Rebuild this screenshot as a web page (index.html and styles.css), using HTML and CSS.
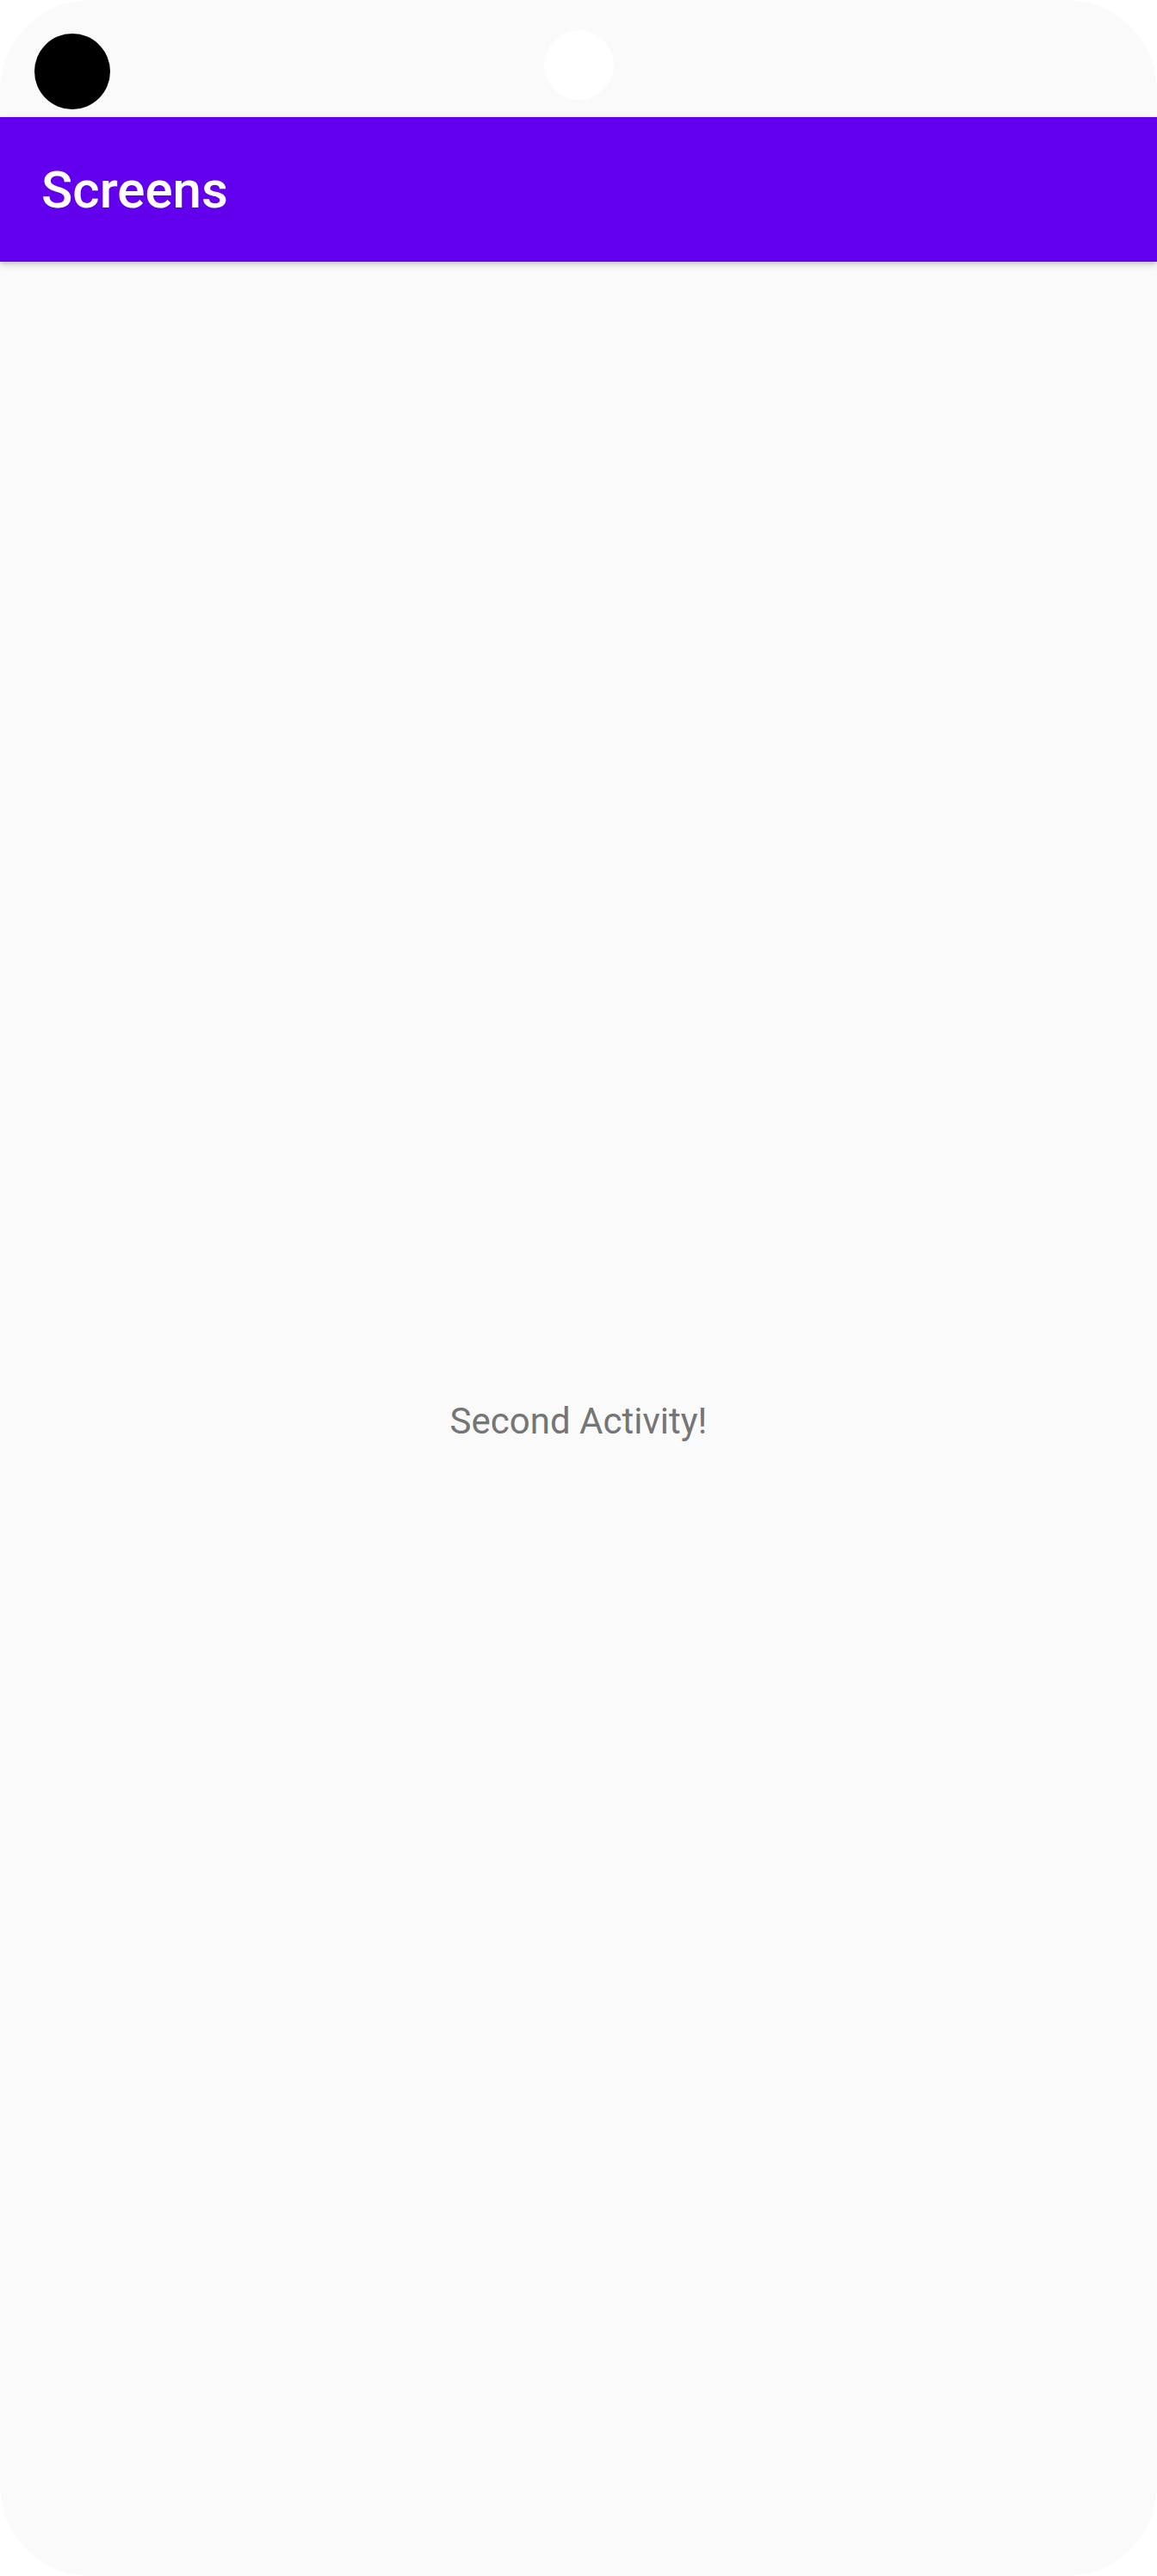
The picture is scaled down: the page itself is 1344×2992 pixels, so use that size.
FILE: index.html
```html
<!DOCTYPE html>
<html>
<head>
<meta charset="utf-8">
<link rel="stylesheet" href="styles.css">
</head>
<body>
<div class="screen">
  <div class="status-bar">
    <div class="camera"></div>
    <div class="sensor"></div>
    <div></div>
  </div>
  <header class="app-bar">
    <h1 class="app-title">Screens</h1>
  </header>
  <main class="content">
    <p class="message">Second Activity!</p>
  </main>
</div>
</body>
</html>
```
FILE: styles.css
```css
html, body {
  margin: 0;
  padding: 0;
  background: #ffffff;
}
.screen {
  width: 1344px;
  height: 2992px;
  background: #fafafa;
  border-radius: 106px;
  overflow: hidden;
  display: flex;
  flex-direction: column;
  font-family: Roboto, "Noto Sans", sans-serif;
}
.status-bar {
  height: 136px;
  flex: none;
  display: grid;
  grid-template-columns: 1fr auto 1fr;
  align-items: start;
}
.camera {
  width: 88px;
  height: 88px;
  border-radius: 50%;
  background: #000000;
  margin: 39px 0 0 40px;
}
.sensor {
  width: 81px;
  height: 81px;
  border-radius: 50%;
  background: #ffffff;
  margin-top: 35px;
}
.app-bar {
  height: 168px;
  flex: none;
  background: #6200ee;
  display: flex;
  align-items: center;
  padding: 0 48px;
  box-shadow: 0 4px 8px rgba(0, 0, 0, 0.14), 0 2px 4px rgba(0, 0, 0, 0.1);
  position: relative;
  z-index: 1;
}
.app-title {
  margin: 0;
  font-size: 60px;
  font-weight: 500;
  color: #ffffff;
}
.content {
  flex: 1;
  display: flex;
  align-items: center;
  justify-content: center;
}
.message {
  margin: 5px 0 0 0;
  font-size: 42px;
  color: #757575;
}
```
